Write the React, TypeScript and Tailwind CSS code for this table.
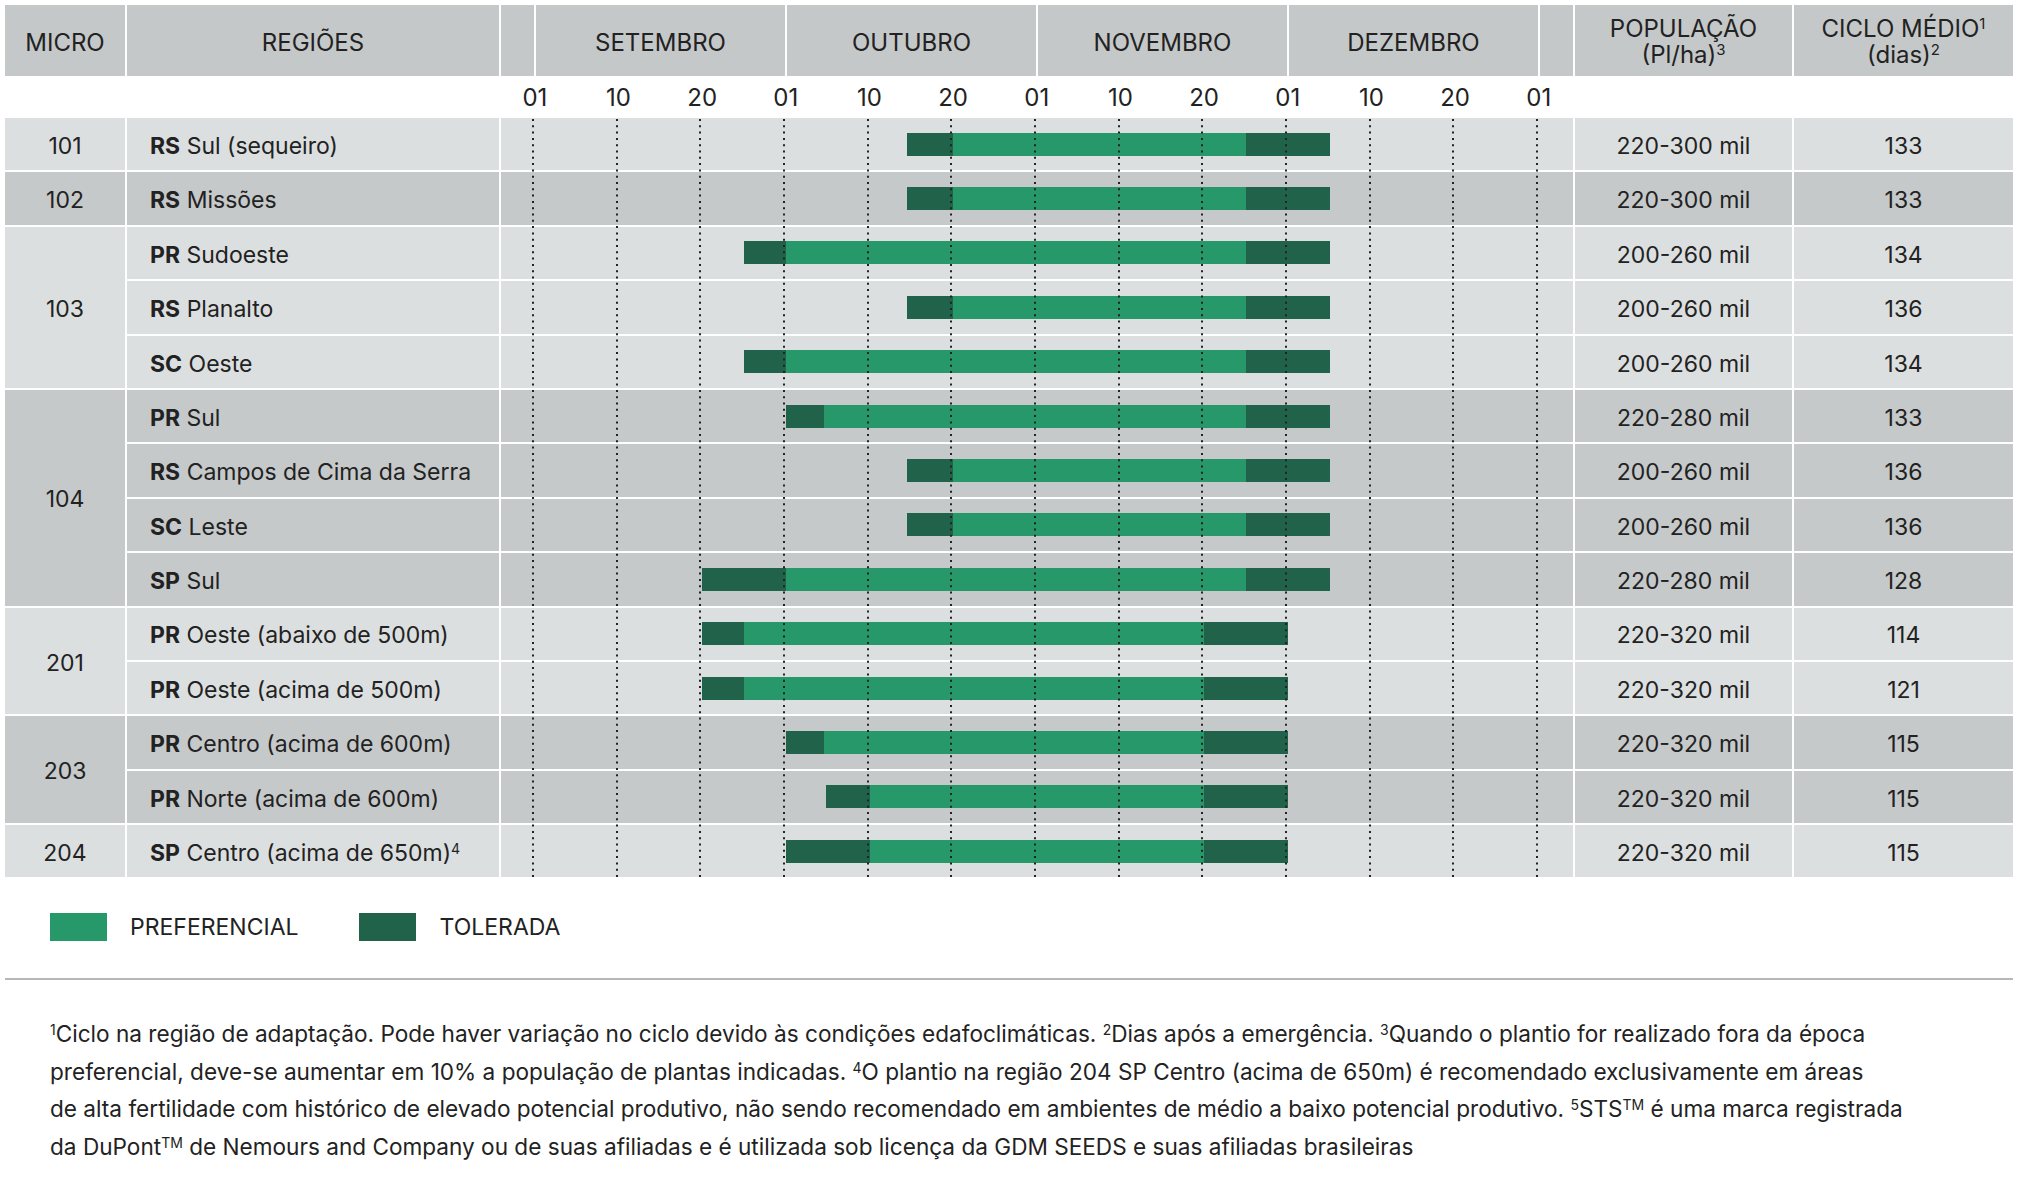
import React from "react";

type Row = {
  micro?: string;
  span?: number;
  group: number;
  code: string;
  name: string;
  sup?: string;
  bar: [number, number, number, number];
  pop: string;
  ciclo: string;
};

const TICK = 83.667;
const TICK0 = 34;

const rows: Row[] = [
  { micro: "101", span: 1, group: 0, code: "RS", name: "Sul (sequeiro)", bar: [4.45, 5, 8.5, 9.5], pop: "220-300 mil", ciclo: "133" },
  { micro: "102", span: 1, group: 1, code: "RS", name: "Missões", bar: [4.45, 5, 8.5, 9.5], pop: "220-300 mil", ciclo: "133" },
  { micro: "103", span: 3, group: 2, code: "PR", name: "Sudoeste", bar: [2.5, 3, 8.5, 9.5], pop: "200-260 mil", ciclo: "134" },
  { group: 2, code: "RS", name: "Planalto", bar: [4.45, 5, 8.5, 9.5], pop: "200-260 mil", ciclo: "136" },
  { group: 2, code: "SC", name: "Oeste", bar: [2.5, 3, 8.5, 9.5], pop: "200-260 mil", ciclo: "134" },
  { micro: "104", span: 4, group: 3, code: "PR", name: "Sul", bar: [3, 3.45, 8.5, 9.5], pop: "220-280 mil", ciclo: "133" },
  { group: 3, code: "RS", name: "Campos de Cima da Serra", bar: [4.45, 5, 8.5, 9.5], pop: "200-260 mil", ciclo: "136" },
  { group: 3, code: "SC", name: "Leste", bar: [4.45, 5, 8.5, 9.5], pop: "200-260 mil", ciclo: "136" },
  { group: 3, code: "SP", name: "Sul", bar: [2, 3, 8.5, 9.5], pop: "220-280 mil", ciclo: "128" },
  { micro: "201", span: 2, group: 4, code: "PR", name: "Oeste (abaixo de 500m)", bar: [2, 2.5, 8, 9], pop: "220-320 mil", ciclo: "114" },
  { group: 4, code: "PR", name: "Oeste (acima de 500m)", bar: [2, 2.5, 8, 9], pop: "220-320 mil", ciclo: "121" },
  { micro: "203", span: 2, group: 5, code: "PR", name: "Centro (acima de 600m)", bar: [3, 3.45, 8, 9], pop: "220-320 mil", ciclo: "115" },
  { group: 5, code: "PR", name: "Norte (acima de 600m)", bar: [3.48, 4, 8, 9], pop: "220-320 mil", ciclo: "115" },
  { micro: "204", span: 1, group: 6, code: "SP", name: "Centro (acima de 650m)", sup: "4", bar: [3, 4, 8, 9], pop: "220-320 mil", ciclo: "115" },
];

const spanClass: Record<number, string> = {
  1: "row-span-1",
  2: "row-span-2",
  3: "row-span-3",
  4: "row-span-4",
};

const days = ["01", "10", "20", "01", "10", "20", "01", "10", "20", "01", "10", "20", "01"];

const bgFor = (g: number) => (g % 2 === 0 ? "bg-[#dcdfe0]" : "bg-[#c6c9ca]");

const Bar = ({ bar }: { bar: Row["bar"] }) => {
  const [a, b, c, d] = bar;
  return (
    <div
      className="flex h-[23px]"
      style={{ marginLeft: TICK0 + a * TICK, width: (d - a) * TICK }}
    >
      <div className="h-full bg-[#21634a]" style={{ width: (b - a) * TICK }} />
      <div className="h-full bg-[#26986a]" style={{ width: (c - b) * TICK }} />
      <div className="h-full flex-1 bg-[#21634a]" />
    </div>
  );
};

export default function App() {
  return (
    <div className="w-[2018px] min-h-[1201px] bg-white pl-[5px] pt-[5px] font-['Inter',sans-serif] text-[#222]">
      {/* Header */}
      <div className="grid h-[71px] w-[2008px] grid-cols-[120px_372px_33px_249px_249px_249px_249px_33px_217px_219px] gap-x-[2px] text-[24px] uppercase">
        <div className="flex items-center justify-center bg-[#c5c8c9] pt-[4px]">Micro</div>
        <div className="flex items-center justify-center bg-[#c5c8c9] pt-[4px]">Regiões</div>
        <div className="bg-[#c5c8c9]" />
        <div className="flex items-center justify-center bg-[#c5c8c9] pt-[4px]">Setembro</div>
        <div className="flex items-center justify-center bg-[#c5c8c9] pt-[4px]">Outubro</div>
        <div className="flex items-center justify-center bg-[#c5c8c9] pt-[4px]">Novembro</div>
        <div className="flex items-center justify-center bg-[#c5c8c9] pt-[4px]">Dezembro</div>
        <div className="bg-[#c5c8c9]" />
        <div className="flex flex-col items-center justify-center bg-[#c5c8c9] pt-[2px] leading-[26px]">
          <span>POPULAÇÃO</span>
          <span className="normal-case">
            (Pl/ha)<sup className="text-[15px]">3</sup>
          </span>
        </div>
        <div className="flex flex-col items-center justify-center bg-[#c5c8c9] pt-[2px] leading-[26px]">
          <span>
            CICLO MÉDIO<sup className="text-[15px]">1</sup>
          </span>
          <span className="normal-case">
            (dias)<sup className="text-[15px]">2</sup>
          </span>
        </div>
      </div>

      {/* Day axis */}
      <div className="grid h-[42px] w-[2008px] grid-cols-[120px_372px_1072px_217px_219px] gap-x-[2px]">
        <div />
        <div />
        <div className="ml-[-8px] flex items-center pt-[2px] text-[24px]">
          {days.map((d, i) => (
            <span key={i} className="w-[83.667px] shrink-0 text-center">
              {d}
            </span>
          ))}
        </div>
        <div />
        <div />
      </div>

      {/* Body */}
      <div className="relative w-[2008px]">
        <div className="grid grid-cols-[120px_372px_1072px_217px_219px] auto-rows-[52.4px] gap-[2px] text-[23px]">
          {rows.map((r, i) => (
            <React.Fragment key={i}>
              {r.micro && (
                <div
                  className={`col-start-1 flex items-center justify-center pt-[4px] ${spanClass[r.span ?? 1]} ${bgFor(r.group)}`}
                >
                  {r.micro}
                </div>
              )}
              <div className={`col-start-2 flex items-center pl-[23px] pt-[4px] ${bgFor(r.group)}`}>
                <span>
                  <b className="font-bold">{r.code}</b> {r.name}
                  {r.sup && <sup className="text-[14px]">{r.sup}</sup>}
                </span>
              </div>
              <div className={`col-start-3 flex items-center ${bgFor(r.group)}`}>
                <Bar bar={r.bar} />
              </div>
              <div className={`col-start-4 flex items-center justify-center pt-[4px] ${bgFor(r.group)}`}>{r.pop}</div>
              <div className={`col-start-5 flex items-center justify-center pt-[4px] ${bgFor(r.group)}`}>{r.ciclo}</div>
            </React.Fragment>
          ))}
        </div>
        {/* dotted day ticks over the chart column */}
        <svg
          className="pointer-events-none absolute top-0 bottom-0 left-[494px] h-full w-[1072px]"
          aria-hidden
        >
          {days.map((_, k) => {
            const x = Math.round(TICK0 + k * TICK);
            return (
              <line
                key={k}
                x1={x}
                x2={x}
                y1={1}
                y2="100%"
                stroke="#222"
                strokeWidth={2}
                strokeDasharray="2 4.3"
              />
            );
          })}
        </svg>
      </div>

      {/* Legend */}
      <div className="mt-[36px] ml-[45px] flex h-[28px] items-center text-[23px] uppercase">
        <span className="h-[28px] w-[57px] bg-[#26986a]" />
        <span className="ml-[23px]">Preferencial</span>
        <span className="ml-[60px] h-[28px] w-[57px] bg-[#21634a]" />
        <span className="ml-[24px]">Tolerada</span>
      </div>

      <div className="mt-[37px] h-[2px] w-[2008px] bg-[#b5b8ba]" />

      {/* Footnotes */}
      <div className="ml-[45px] mt-[35px] text-[22.6px] leading-[37.5px] text-[#222]">
        <sup className="text-[14px]">1</sup>Ciclo na região de adaptação. Pode haver variação no ciclo devido às condições edafoclimáticas.{" "}
        <sup className="text-[14px]">2</sup>Dias após a emergência. <sup className="text-[14px]">3</sup>Quando o plantio for realizado fora da época
        <br />
        preferencial, deve-se aumentar em 10% a população de plantas indicadas. <sup className="text-[14px]">4</sup>O plantio na região 204 SP Centro (acima de 650m) é recomendado exclusivamente em áreas
        <br />
        de alta fertilidade com histórico de elevado potencial produtivo, não sendo recomendado em ambientes de médio a baixo potencial produtivo.{" "}
        <sup className="text-[14px]">5</sup>STS<sup className="text-[14px]">TM</sup> é uma marca registrada
        <br />
        da DuPont<sup className="text-[14px]">TM</sup> de Nemours and Company ou de suas afiliadas e é utilizada sob licença da GDM SEEDS e suas afiliadas brasileiras
      </div>
    </div>
  );
}
